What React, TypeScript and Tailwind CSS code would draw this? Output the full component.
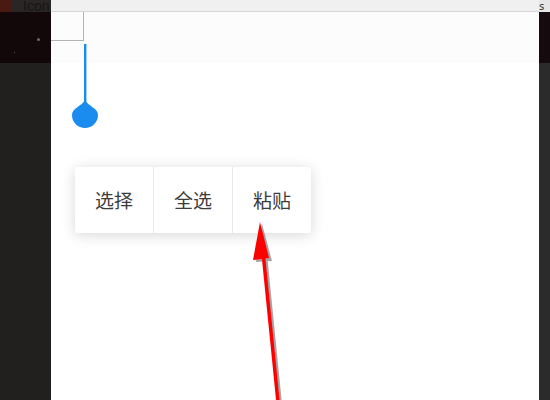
import { Fragment } from 'react'

// ─── Context menu ─────────────────────────────────────────────────────────────
function EditMenu() {
  const items = ['选择', '全选', '粘贴']
  return (
    <div className="absolute left-[24px] top-[155px] flex h-[66px] rounded-[3px] bg-white shadow-[0_2px_14px_rgba(0,0,0,0.16)]">
      {items.map((label, i) => (
        <Fragment key={label}>
          {i > 0 && <div className="w-px bg-[#e8e8e8]" />}
          <div className="flex w-[78px] items-center justify-center text-[19px] text-[#3c3c3c] [font-family:'Noto_Sans_CJK_SC',sans-serif]">
            {label}
          </div>
        </Fragment>
      ))}
    </div>
  )
}

export default function App() {
  return (
    <div className="flex h-[400px] w-[550px] overflow-hidden bg-[#221f1f] [font-family:'Noto_Sans','Noto_Sans_CJK_SC',sans-serif]">
      {/* left desktop strip */}
      <div className="flex w-[51px] shrink-0 flex-col">
        <div className="flex h-[12px] items-center bg-[#2b2626]">
          <div className="h-[12px] w-[12px] shrink-0 bg-[#4a1a12]" />
          <span className="ml-[11px] whitespace-nowrap text-[14px] leading-[12px] text-[#151515] [font-family:'Liberation_Sans',sans-serif]">Icon</span>
        </div>
        <div className="relative h-[51px] bg-[#120709]">
          <span className="absolute left-[37px] top-[26px] h-[3px] w-[3px] rounded-full bg-[#6a6a6a]" />
          <span className="absolute left-[14px] top-[40px] h-[1px] w-[1px] bg-[#555]" />
        </div>
        <div className="flex-1 bg-[#221f1f]" />
      </div>

      {/* phone window */}
      <div className="flex w-[488px] shrink-0 flex-col">
        <div className="h-[12px] border-b border-[#d6d6d6] bg-[#f0f0f0]" />
        <div className="relative flex-1 bg-white">
          <div className="h-[51px] bg-[#fcfcfc]" />

          {/* selection box corner */}
          <div className="absolute left-0 top-0 h-[29px] w-[33px] border-b border-r border-[#b4b4b4]" />

          {/* cursor handle */}
          <svg className="absolute left-[20px] top-[32px]" width="28" height="86" viewBox="0 0 28 86">
            <rect x="13" y="0" width="2.4" height="62" fill="#1a8cf0" />
            <path d="M14 56 C17 62 27 64 27 71 A13 13 0 1 1 1 71 C1 64 11 62 14 56 Z" fill="#1a8cf0" />
          </svg>

          <EditMenu />

          {/* red annotation arrow */}
          <svg className="absolute left-[190px] top-[200px]" width="60" height="200" viewBox="0 0 60 200">
            <g transform="translate(2,2)" opacity="0.35">
              <line x1="38" y1="200" x2="22" y2="40" stroke="#000" strokeWidth="4" />
              <path d="M19 10 L29 47 L13 48 Z" fill="#000" />
            </g>
            <line x1="38" y1="200" x2="22" y2="40" stroke="#ff0000" strokeWidth="3.5" />
            <path d="M19 10 L28 46 L12 48 Z" fill="#ff0000" />
          </svg>
        </div>
      </div>

      {/* right desktop strip */}
      <div className="flex w-[11px] shrink-0 flex-col">
        <div className="h-[12px] overflow-hidden whitespace-nowrap bg-[#e6e6e6] text-[11px] leading-[12px] text-[#333]">s</div>
        <div className="h-[51px] bg-[#150a0d]" />
        <div className="flex-1 bg-[#2b2b2b]" />
      </div>
    </div>
  )
}
